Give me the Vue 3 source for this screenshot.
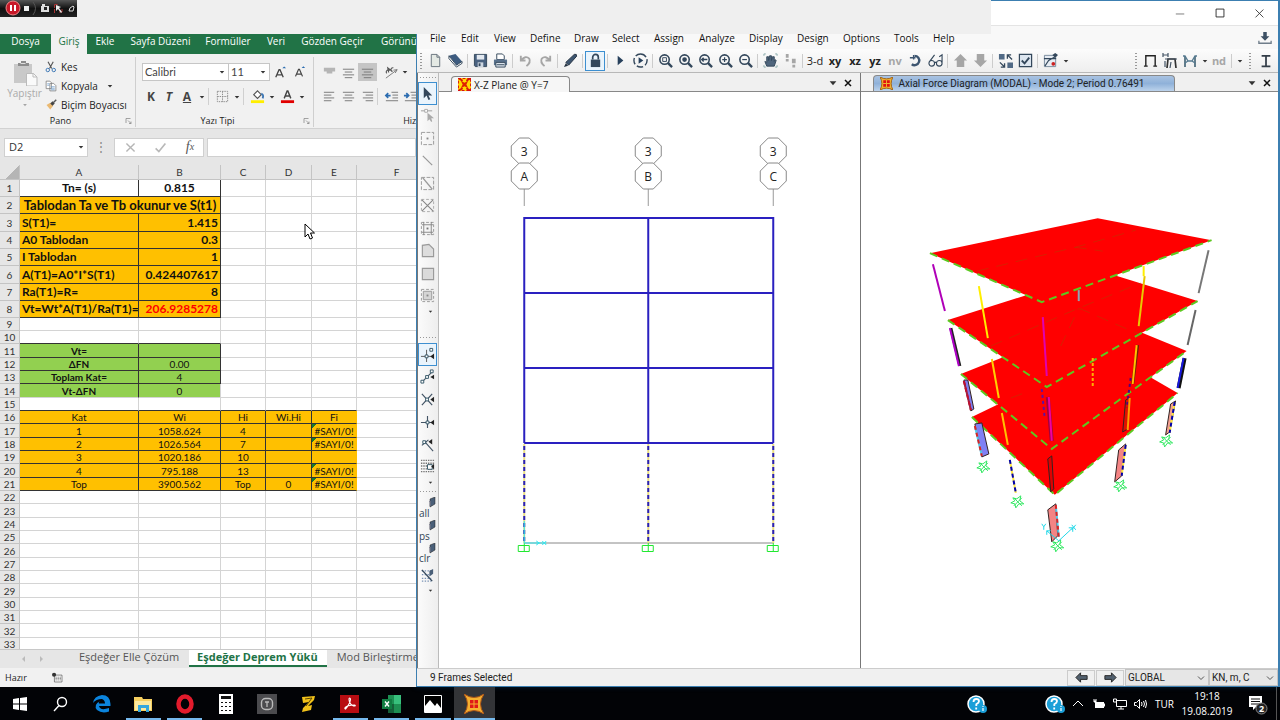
<script setup>
import { h } from 'vue'

const N = '#33475b'
const G = '#a6a6a6'
// Each shape: [path, fill, stroke, stroke width, dash]
const icons = {
  caret: [['M5 6.5h6l-3 3.5z', '#333']],
  close: [['M4 4l8 8M12 4l-8 8', 'none', '#111', 2]],
  min: [['M3 8.5h9', 'none', '#777', 1]],
  max: [['M3.5 3.5h9v9h-9z', 'none', '#222', 1]],
  closeThin: [['M4 4l9 9M13 4l-9 9', 'none', '#333', 1]],
  scissors: [['M4 1l5 9M11 1L6 10', 'none', '#555', 1.5], ['M6 12a2.3 2.3 0 1 1-4.6 0a2.3 2.3 0 1 1 4.6 0M14 12a2.3 2.3 0 1 1-4.6 0a2.3 2.3 0 1 1 4.6 0', 'none', '#3f78b5', 1.3]],
  copy: [['M1.5 1.5h5l2 2v8h-7zM6.500 4.500h5l3 3v7h-8z', '#fff', '#777', 1], ['M3 5h3M3 7h3M8 9h5M8 11h5M8 13h5', 'none', '#6d9bc9', 1]],
  brush: [['M2 8l5-3 4 4-4 5z', '#eab972'], ['M7 6l3-3 3 3-3 3z', '#444'], ['M11 5l4-4', 'none', '#555', 2]],
  paste: [['M2 4h18v19H2z', '#c9c9c9'], ['M6 6V3h3V1h5v2h3v3z', '#8c8c8c'], ['M8.500 3.500h5', 'none', '#ddd', 1], ['M14.500 13.500h7l3.500 3.500v9h-10.500z', '#fafafa', '#bbb', 1], ['M21 13v4h4', 'none', '#bbb', 1]],
  growA: [['M4 13L7.500 5h1L12 13M5.500 10.500h5', 'none', '#444', 1.4], ['M11 3.500l2-2 2 2z', '#2b6cb0']],
  borders: [['M2.500 2.500h11v11h-11zM8 2.500v11M2.500 8h11', 'none', '#888', 1, '1.500 1']],
  bucket: [['M4 6l4-4 4 4-4 4z', '#fff', '#555', 1.2], ['M12 5q3 1 1.500 5', 'none', '#3f78b5', 2], ['M1 12h14v3H1z', '#ffee00']],
  fontA: [['M4.500 10L7.600 2h.8L11.500 10M5.500 7.500h5', 'none', '#444', 1.5], ['M1 12h14v3H1z', '#e00000']],
  alTop: [['M2 3h12v4H2zM5 7h6v2H5z', '#b5b5b5']],
  alMid: [['M2 4.500h12M4 7.500h8M2 10.500h12M4 13.500h8', 'none', '#777', 1]],
  alLeft: [['M2 3.500h11M2 6.500h8M2 9.500h11M2 12.500h8', 'none', '#777', 1]],
  alCen: [['M2 3.500h12M4 6.500h8M2 9.500h12M4 12.500h8', 'none', '#777', 1]],
  alRight: [['M3 3.500h11M6 6.500h8M3 9.500h11M6 12.500h8', 'none', '#777', 1]],
  orient: [['M2 14L14 5M14 5l-4 .5M14 5l-2 3.500', 'none', '#777', 1], ['M6 6a2 2 0 1 0-3 3M5 8l-1-5 5 4a2 2 0 1 1 1-4', 'none', '#555', 1.2]],
  outdent: [['M8 3.500h7M9 6.500h6M9 9.500h6M2 12.500h13', 'none', '#777', 1], ['M7 7H2M4.500 4.500L2 7l2.500 2.500', 'none', '#2b6cb0', 1.8]],
  indent: [['M8 3.500h7M9 6.500h6M9 9.500h6M2 12.500h13', 'none', '#777', 1], ['M1 7h5M3.500 4.500L6 7 3.500 9.500', 'none', '#2b6cb0', 1.8]],
  launcher: [['M2 12V3h9', 'none', '#777', 1.300], ['M6 7l6 6M12 9v4H8', 'none', '#777', 1.300]],
  x: [['M3 3l10 10M13 3L3 13', 'none', '#b5b5b5', 1.7]],
  tick: [['M2 9l4 4 8-10', 'none', '#b8b8b8', 2]],
  macro: [['M3.500 4.500h11v10h-11z', '#fff', '#555', 1], ['M5 7.500h9M5 9.500h9M5 11.500h9', 'none', '#555', 1, '2 1'], ['M6 4a3 3 0 1 1-6 0a3 3 0 1 1 6 0', '#333']],
  // structural toolbar
  file: [['M3.500 1.500h6l3 3v10h-9z', '#e4e9e4', '#66727c', 1], ['M9.500 1.500v3h3', 'none', '#66727c', 1]],
  book: [['M1 3l7-2 7 8-6 4z', '#3d5c80'], ['M1 3v3l8 9 6-4V9l-6 4z', '#fff', '#33475b', 1]],
  save: [['M1.500 1.500h13v13h-12l-1-1z', '#4a6280', N, 1], ['M4 2h8v5H4z', '#e3e9f0'], ['M5 10h6v5H5z', '#cfd8e2'], ['M6 11h2v3H6z', N]],
  print: [['M4 1h6l2 2v4H4z', '#fff', N, 1], ['M1 7h14v6H1z', '#59718c'], ['M3 10h10v5H3z', '#dbe3ec', N, 1], ['M4 12.500h8', 'none', N, 1]],
  undo: [['M3 3v5h5M3 8q5-6 9-2 2 4-3 8', 'none', G, 2]],
  redo: [['M13 3v5H8M13 8Q8 2 4 6q-2 4 3 8', 'none', G, 2]],
  pen: [['M3 10L12 1.500q3-1 2.500 2L6 13z', '#3d5570', '#22303f', 1], ['M1 15l2-4 2.500 2.500z', '#22303f']],
  lock: [['M3 7h10v8H3z', N], ['M5 7V4.500a3 3 0 0 1 6 0V7', 'none', N, 1.8]],
  play: [['M5 3l6 5-6 5z', '#27405c']],
  playC: [['M6 4.500l5 3.500-5 3.500z', '#27405c'], ['M8 1a7 7 0 1 1 0 14a7 7 0 1 1 0-14', 'none', '#33475b', 1.5, '7 2.500']],
  mag: [['M12 7a5 5 0 1 1-10 0a5 5 0 1 1 10 0', 'none', N, 1.700], ['M10.500 10.500L15 15', 'none', N, 2.5]],
  hand: [['M4 14L2 9l2 1V4h2v4l1-5h2v5l1-4h2v5l1-2 1 1-2 6z', '#4f657d', '#33475b', 1], ['M1 3V1h2M13 1h2v2M1 13v2h2M15 13v2h-2', 'none', '#8aa', 1]],
  steps: [['M3 1h3v4H3zM3 6.500h3v2.500H3zM9.500 6h4v5h-4zM10 12.500h3v3h-3z', G]],
  rotate: [['M7 3a5 5 0 1 1-3 9', 'none', '#3d5570', 2.500], ['M2 5h6M6 2v5', 'none', '#3d5570', 1.500]],
  glasses: [['M7 11a3 3 0 1 1-6 0a3 3 0 1 1 6 0M15 11a3 3 0 1 1-6 0a3 3 0 1 1 6 0M1 10L7 2M7 10h2M15 10V2l-3 2', 'none', N, 1.2]],
  up: [['M8 1l7 7h-3v7H4V8H1z', G]],
  down: [['M8 15L1 8h3V1h8v7h3z', G]],
  swap: [['M1 1h6v6H1zM10 10h6v6h-6z', '#516a86'], ['M15 7L10 2M10 6V2h4M2 10l5 5M7 11v4H3', 'none', N, 1.400]],
  check: [['M1.500 1.500h13v13h-13z', '#dde6f0', N, 1.300], ['M4 8l3 3 5-6', 'none', N, 2]],
  view: [['M1.500 2.500h12v12h-12z', '#e6ecf3', '#78899c', 1], ['M1 6h13M2 14l4-6 7-4', 'none', N, 1.200], ['M13 11.500a2 2 0 1 1-4 0a2 2 0 1 1 4 0', '#c22'], ['M10 2l3-2 3 2-3 3z', '#33475b']],
  portal: [['M3 14V3h10v11M1 14h4M11 14h4', 'none', '#222', 1.500]],
  portal2: [['M5 15l1-9h7l1 9', 'none', '#333', 1.700], ['M3 6h12M3 14V8M9 9l-1 6M1 2h5M1 0v4M6 0v4', 'none', '#456', 1.200]],
  portal3: [['M3 14V3M13 14V3', 'none', '#33576b', 1.500], ['M1 3h2l3 5h4l3-5h2M3 10l3-2M13 10l-3-2', 'none', '#557a90', 1.300]],
  ibeam: [['M3 2h10M8 2v12M3 14h10', 'none', '#333d48', 2]],
  download: [['M6 1h4v5h3L8 11 3 6h3z', '#3d5064'], ['M1 11v3h14v-3', 'none', '#6f7d8a', 1.500]],
  left: [['M7 3v3h7v4H7v3L2 8z', '#52606e', '#222', 1]],
  right: [['M9 3v3H2v4h7v3l5-5z', '#52606e', '#222', 1]],
  // side tools
  arrow: [['M4 1v12l3-3 2 5 2-1-2-4h4z', N]],
  reshape: [['M1 3h12', 'none', '#aaa', 1.200], ['M5 1.500h3v3H5z', '#fff', '#aaa', 1], ['M8 5v9l2-2 2 3 1-1-1-3h3z', '#aaa']],
  joint: [['M1.500 1.500h13v13h-13z', 'none', '#999', 1, '4 1.500'], ['M7 7h2v2H7z', '#888']],
  line: [['M3 3l10 10', 'none', '#999', 1.300]],
  lineBox: [['M1.500 1.500h13v13h-13z', 'none', '#999', 1, '4 1.500'], ['M3 2l10 12', 'none', '#999', 1.500]],
  brace: [['M1.500 1.500h13v13h-13z', 'none', '#aaa', 1, '3 2'], ['M2 2l12 12M14 2L2 14', 'none', '#888', 1.200]],
  beams: [['M1.500 1.500h13v13h-13z', 'none', '#999', 1, '3 2'], ['M4 1v14M12 1v14M2 4h12M2 12h12', 'none', '#888', 1], ['M7 7h2v2H7z', '#777']],
  poly: [['M2.500 14.500v-12l7-1 5 5v8z', '#ddd', '#999', 1.200]],
  rect: [['M2.500 2.500h12v12h-12z', '#dadada', '#999', 1.200]],
  rectBox: [['M1.500 1.500h13v13h-13z', 'none', '#999', 1, '3 2'], ['M3.500 3.500h9v9h-9z', '#d5d5d5', '#999', 1], ['M7 7h2v2H7z', '#888']],
  snap1: [['M1 10h12M7 3v13', 'none', '#555', 1], ['M5.500 8.500h3v3h-3zM10.500 1.500h3v3h-3z', '#fff', '#356', 1], ['M15 7v6l-4-3z', '#222']],
  snap2: [['M2 14L13 3', 'none', '#456', 1.200], ['M1 12h3v3H1zM6 7h3v3H6zM11 1h3v3h-3z', '#fff', '#356', 1], ['M15 6v5l-4-2.500z', '#222']],
  snap3: [['M2 2l11 12M13 2L2 14', 'none', '#456', 1.300], ['M6 6.500h3v3H6z', '#fff', '#356', 1], ['M15 5v6l-4-3z', '#222']],
  snap4: [['M1 9h12M8 2v13', 'none', '#456', 1.200], ['M6.500 7.500h3v3h-3z', '#fff', '#356', 1], ['M15 6v6l-4-3z', '#222']],
  snap5: [['M5 5l9 10M2 9l7-6', 'none', '#456', 1.200], ['M3 4h3v3H3z', '#fff', '#356', 1], ['M13 2v6L9 5z', '#222']],
  snap6: [['M1 1.500h14M1 4.500h14M1 7.500h14M1 10.500h14M1 13.500h14', 'none', '#777', 1.500, '1.500 1'], ['M8 6h5v5H8z', '#fff', '#356', 1], ['M15 5v6l-3-3z', '#222']],
  flag: [['M4 2l5-2v7l-5 3z', '#4a5f78', '#222', 0.500], ['M3 5l1-1v5', 'none', '#889', 1]],
  interLine: [['M2 3h10M2 7h10M2 11h10M2 14h10', 'none', '#7a93b5', 1.200, '1.500 1.500'], ['M2 2l11 12', 'none', N, 1.500], ['M10 3l4-2v5l-4 3z', '#4a5f78']]
}
const magIn = {
  magR: [['M5 5h4v4H5z', 'none', N, 1]],
  magD: [['M9.500 7a2.500 2.500 0 1 1-5 0a2.500 2.500 0 1 1 5 0', N]],
  magB: [['M4 7h6M6 5L4 7l2 2', 'none', N, 1.500]],
  magP: [['M4.500 7h5M7 4.500v5', 'none', N, 1.300]],
  magM: [['M4.500 7h5', 'none', N, 1.300]]
}
for (const k in magIn) icons[k] = [...icons.mag, ...magIn[k]]

const Ico = (p) => {
  const b = p.b || 16
  const s = p.s || 16
  return h('svg', { viewBox: `0 0 ${b} ${b}`, width: s, height: s, 'aria-hidden': 'true' },
    icons[p.n].map(([d, fill, stroke, w, dash]) =>
      h('path', { d, fill, stroke: stroke || 'none', 'stroke-width': w, 'stroke-dasharray': dash })))
}
Ico.props = ['n', 's', 'b']

const ribbonTabs = ['Dosya', 'Giriş', 'Ekle', 'Sayfa Düzeni', 'Formüller', 'Veri', 'Gözden Geçir', 'Görünür']
const cols = ['A', 'B', 'C', 'D', 'E', 'F']
const top = [
  ['Tn= (s)', '0.815'], ['Tablodan Ta ve Tb okunur ve S(t1)'], ['S(T1)=', '1.415'], ['A0 Tablodan', '0.3'],
  ['I Tablodan', '1'], ['A(T1)=A0*I*S(T1)', '0.424407617'], ['Ra(T1)=R=', '8'], ['Vt=Wt*A(T1)/Ra(T1)=', '206.9285278']
]
const mid = { 11: ['Vt=', ''], 12: ['ΔFN', '0.00'], 13: ['Toplam Kat=', '4'], 14: ['Vt-ΔFN', '0'] }
const low = {
  16: ['Kat', 'Wi', 'Hi', 'Wi.Hi', 'Fi'], 17: ['1', '1058.624', '4', '', '#SAYI/0!'], 18: ['2', '1026.564', '7', '', '#SAYI/0!'],
  19: ['3', '1020.186', '10', '', ''], 20: ['4', '795.188', '13', '', '#SAYI/0!'], 21: ['Top', '3900.562', 'Top', '0', '#SAYI/0!']
}
const rows = Array.from({ length: 33 }, (_, i) => {
  const n = i + 1
  const src = n < 9 ? top[i] : mid[n] || low[n] || []
  const kind = n === 1 ? 'first' : n < 9 ? 'calc' : mid[n] ? 'green' : low[n] ? 'amber' : ''
  const used = kind === 'amber' ? 5 : kind ? 2 : 0
  const cells = []
  for (let c = 0; c < 6; c++) {
    if (n === 2 && c === 1) continue
    const text = src[c] || ''
    cells.push({
      text,
      span: n === 2 && c === 0 ? 2 : 1,
      cls: [c < used ? kind : '', c < used && n !== 14 ? 'line' : '', c === 4 && kind === 'amber' ? 'end' : '',
        n > 2 && n < 9 ? (c === 0 ? 'l' : 'r') : '', n === 2 && c === 0 ? 'wide' : '', n === 8 && c === 1 ? 'red' : '', text[0] === '#' ? 'err' : '',
        (n === 10 && c < 2) || (n === 15 && c < 5) ? 'over' : '', n === 14 && c === 0 ? 'side' : '']
    })
  }
  return { n, tall: n < 9, long: n < 9 ? n % 3 === 0 : (n - 8) % 3 === 0, cells }
})

const menus = ['File', 'Edit', 'View', 'Define', 'Draw', 'Select', 'Assign', 'Analyze', 'Display', 'Design', 'Options', 'Tools', 'Help']
const tools = ['file', 'book', '|', 'save', 'print', '|', 'undo', 'redo', '|', 'pen', '|', 'lock', '|', 'play', 'playC', '|',
  'magR', 'magD', 'magB', 'magP', 'magM', '|', 'hand', 'steps', '|', '=3-d', '=xy', '=xz', '=yz', '=nv', 'rotate', 'glasses', '|',
  'up', 'down', '|', 'swap', 'check', '|', 'view']
const draw = ['arrow', 'reshape', 'joint', 'line', 'lineBox', 'brace', 'beams', 'poly', 'rect', 'rectBox']
const snaps = ['snap1', 'snap2', 'snap3', 'snap4', 'snap5', 'snap6']
const picks = ['all', 'ps', 'clr']

const axes = [[524, 'A'], [648, 'B'], [773, 'C']]
const oct = (x, y) => [[-5, -13], [5, -13], [13, -5], [13, 5], [5, 13], [-5, 13], [-13, 5], [-13, -5]]
  .map(([a, b]) => `${x + a},${y + b}`).join(' ')

// Floors from lowest to highest: left, back, right, front
const floors = [
  [[971, 417], [1106, 352], [1177, 393], [1054, 495]],
  [[960, 374], [1103, 317], [1186, 351], [1051, 449]],
  [[947, 320], [1101, 271], [1197, 301], [1046, 387]],
  [[929, 253], [1097, 218], [1211, 240], [1041, 302]]
].map(([l, b, r, f]) => ({ face: [l, b, r, f].join(' '), edge: [l, f, r].join(' ') }))
// Members: x1, y1, x2, y2, colour, width, dash
const bars = [
  [932, 264, 944, 311, '#b000b8', 2], [978, 286, 987, 338, '#ffee00', 2], [1078, 290, 1078, 301, '#8fa3b5', 2],
  [1042, 317, 1046, 376, '#e000b0', 2], [1143, 266, 1143, 276, '#ffee00', 2], [1144, 276, 1138, 326, '#e8c800', 2],
  [1208, 250, 1198, 293, '#777', 2], [950, 328, 959, 366, '#222', 3], [949, 328, 958, 366, '#b000c8', 2],
  [991, 359, 998, 398, '#ffd000', 2], [1092, 358, 1092, 388, '#ffb000', 2, '3 2'], [1047, 397, 1051, 441, '#a00040', 4],
  [1048, 397, 1051, 441, '#f000a0', 2], [1041, 389, 1044, 419, '#6010a0', 2, '3 3'],
  [1137, 345, 1132, 384, '#702000', 3], [1136, 345, 1132, 384, '#ffc000', 2], [1195, 310, 1187, 345, '#666', 2],
  [1184, 358, 1178, 388, '#111', 4], [1183, 358, 1177, 388, '#1818e0', 2],
  [1001, 413, 1007, 445, '#ffc000', 2], [1130, 378, 1126, 408, '#500080', 2, '3 3'], [1129, 398, 1127, 430, '#ffa000', 2]
]
const panels = [
  ['963,380 967,380 973,409 970,411', '#7c7cf0'], ['974,424 981,423 988,454 981,457', '#8080f4'],
  ['1047,510 1055,504 1057,536 1051,542', '#f48484'], ['1118,450 1125,444 1121,476 1114,482', '#f48484'],
  ['1170,404 1175,401 1169,432 1165,435', '#f4a090'], ['1047,459 1051,456 1053,489 1050,492', '#e00000'],
  ['1125,400 1129,398 1127,429 1122,432', '#e01000']
]
const cut = [
  [974, 426, 981, 456, '#d22', '#55c8e8'], [1009, 460, 1015, 493, '#0000b0', '#ffe840'], [1055, 505, 1058, 537, '#d22', '#55c8e8'],
  [1125, 445, 1121, 476, '#0000b0', '#ffe840'], [1174, 402, 1169, 433, '#0000b0', '#ffe840'], [963, 381, 970, 410, '#c01030', '#a02040']
]
const stars = [[983, 467], [1017, 502], [1057, 546], [1120, 486], [1166, 441]]

const apps = [['search'], ['edge'], ['explorer', 1], ['opera', 1], ['calc'], ['typing'], ['zee'], ['pdf', 1], ['excel', 1], ['photos', 1], ['sap', 2]]
</script>

<template>
  <div class="screen">
    <main class="desktop">
      <section class="excel" aria-label="Excel">
        <nav class="ribbon-tabs">
          <button v-for="(t, i) in ribbonTabs" :key="t" :class="{ on: i === 1 }">{{ t }}</button>
        </nav>
        <div class="ribbon">
          <div class="group pano">
            <div class="body">
              <button class="paste"><Ico n="paste" :s="26" :b="26" /><span>Yapıştır</span><Ico n="caret" :s="10" class="faint" /></button>
              <div class="stack">
                <button><Ico n="scissors" :s="12" />Kes</button>
                <button><Ico n="copy" :s="12" />Kopyala<Ico n="caret" :s="12" class="drop" /></button>
                <button><Ico n="brush" :s="12" />Biçim Boyacısı</button>
              </div>
            </div>
            <footer>Pano<Ico n="launcher" :s="8" /></footer>
          </div>
          <div class="group font">
            <div class="body col">
              <div class="line-a">
                <span class="pick face"><select aria-label="Yazı tipi"><option>Calibri</option></select><Ico n="caret" :s="12" /></span>
                <span class="pick size"><select aria-label="Boyut"><option>11</option></select><Ico n="caret" :s="12" /></span>
                <button aria-label="Büyüt"><Ico n="growA" :s="15" /></button>
                <button aria-label="Küçült"><Ico n="growA" :s="14" /></button>
              </div>
              <div class="line-b">
                <button><b>K</b></button><button><b><i>T</i></b></button><button><b><u>A</u></b></button>
                <button class="dd" aria-label="Altı çizili"><Ico n="caret" :s="12" /></button><i class="bar"></i>
                <button aria-label="Kenarlık"><Ico n="borders" :s="15" /></button><button class="dd" aria-label="Kenarlıklar"><Ico n="caret" :s="12" /></button><i class="bar"></i>
                <button aria-label="Dolgu"><Ico n="bucket" :s="15" /></button><button class="dd" aria-label="Dolgu rengi"><Ico n="caret" :s="12" /></button>
                <button aria-label="Yazı rengi"><Ico n="fontA" :s="15" /></button><button class="dd" aria-label="Yazı renkleri"><Ico n="caret" :s="12" /></button>
              </div>
            </div>
            <footer>Yazı Tipi<Ico n="launcher" :s="8" /></footer>
          </div>
          <div class="group align">
            <div class="body col">
              <div class="line-b up">
                <button aria-label="Üste"><Ico n="alTop" :s="15" /></button><button aria-label="Ortaya"><Ico n="alMid" :s="15" /></button>
                <button class="sel" aria-label="Alta"><Ico n="alMid" :s="15" /></button><i class="bar none"></i>
                <button aria-label="Yön"><Ico n="orient" :s="15" /></button><button class="dd" aria-label="Yönler"><Ico n="caret" :s="12" /></button>
              </div>
              <div class="line-b">
                <button aria-label="Sola"><Ico n="alLeft" :s="15" /></button><button aria-label="Ortala"><Ico n="alCen" :s="15" /></button>
                <button aria-label="Sağa"><Ico n="alRight" :s="15" /></button><i class="bar"></i>
                <button aria-label="Azalt"><Ico n="outdent" :s="15" /></button><button aria-label="Artır"><Ico n="indent" :s="15" /></button>
              </div>
            </div>
            <footer>Hizalama</footer>
          </div>
        </div>
        <div class="formula">
          <span class="name"><input aria-label="Ad kutusu" value="D2" /><Ico n="caret" :s="12" /></span>
          <span class="dots">⋮</span>
          <span class="fx">
            <button aria-label="İptal"><Ico n="x" :s="13" /></button><button aria-label="Gir"><Ico n="tick" :s="13" /></button><button class="f">f<sub>x</sub></button>
          </span>
          <input class="expr" aria-label="Formül" />
        </div>
        <div class="sheet">
          <table>
            <colgroup><col class="c0" /><col v-for="c in cols" :key="c" :class="'c' + c" /></colgroup>
            <thead><tr><th class="corner"></th><th v-for="c in cols" :key="c">{{ c }}</th></tr></thead>
            <tbody>
              <tr v-for="r in rows" :key="r.n" :class="{ tall: r.tall, long: r.long }">
                <th>{{ r.n }}</th>
                <td v-for="(c, i) in r.cells" :key="i" :colspan="c.span" :class="c.cls"><span>{{ c.text }}</span></td>
              </tr>
            </tbody>
          </table>
        </div>
        <div class="sheet-tabs">
          <span class="nav"><i></i><i class="next"></i></span>
          <button>Eşdeğer Elle Çözüm</button><button class="on">Eşdeğer Deprem Yükü</button><button>Mod Birleştirme</button>
        </div>
        <div class="ready"><span>Hazır</span><Ico n="macro" :s="11" /></div>
        <svg class="cursor" viewBox="0 0 12 18" width="12" height="18"><path d="M1 1v13l3-3 2 5 2.500-1-2-5h4z" fill="#fff" stroke="#000" /></svg>
      </section>

      <section class="sap" aria-label="SAP2000">
        <header class="title">
          <button aria-label="Simge durumu"><Ico n="min" :s="15" /></button><button aria-label="Ekranı kapla"><Ico n="max" :s="14" /></button><button aria-label="Kapat"><Ico n="closeThin" :s="14" /></button>
        </header>
        <nav class="menu">
          <button v-for="m in menus" :key="m">{{ m }}</button>
          <span class="get"><Ico n="download" :s="14" /></span>
        </nav>
        <div class="tools">
          <i class="grip"></i>
          <template v-for="(t, i) in tools" :key="i">
            <i v-if="t === '|'" class="sep"></i>
            <button v-else-if="t[0] === '='" :class="['txt', { dim: t === '=nv', thin: t === '=3-d' }]">{{ t.slice(1) }}</button>
            <button v-else :class="{ held: t === 'lock' }" :aria-label="t"><Ico :n="t" :s="15" /></button>
          </template>
          <button class="dd" aria-label="more"><Ico n="caret" :s="12" /></button>
          <span class="fill"></span>
          <i class="grip"></i>
          <button aria-label="frame"><Ico n="portal" :s="15" /></button><button aria-label="forces"><Ico n="portal2" :s="16" /></button>
          <button aria-label="shape"><Ico n="portal3" :s="16" /></button><button class="dd small" aria-label="shapes"><Ico n="caret" :s="12" /></button>
          <button class="txt dim">nd</button><i class="sep"></i><button class="dd" aria-label="names"><Ico n="caret" :s="12" /></button>
          <i class="grip"></i><button class="last" aria-label="section"><Ico n="ibeam" :s="14" /></button>
        </div>
        <div class="work">
          <aside>
            <i class="hgrip"></i>
            <div class="ten"><button v-for="(d, i) in draw" :key="d" :class="{ held: !i }" :aria-label="d"><Ico :n="d" :s="15" /></button></div>
            <Ico n="caret" :s="13" class="more" />
            <i class="hgrip low"></i>
            <div class="six"><button v-for="(d, i) in snaps" :key="d" :class="{ held: !i }" :aria-label="d"><Ico :n="d" :s="15" /></button></div>
            <Ico n="caret" :s="13" class="more" />
            <i class="hgrip"></i>
            <div class="four">
              <button v-for="p in picks" :key="p" class="word">{{ p }}<Ico n="flag" :s="11" :b="11" /></button>
              <button aria-label="line select"><Ico n="interLine" :s="15" /></button>
            </div>
            <Ico n="caret" :s="13" class="more" />
          </aside>
          <article class="doc first-doc">
            <div class="doc-bar">
              <button class="tab plain"><svg viewBox="0 0 14 14" width="13" height="13"><path d="M0 0h14v14H0z" fill="#ffd800" /><path d="M0 0l5 3M14 0L9 3M0 14l5-3M14 14l-5-3" stroke="#d81010" stroke-width="2" /><path d="M0 0h14v14H0z" fill="none" stroke="#d81010" stroke-width="2" stroke-dasharray="3 2" /><path d="M3 3l4 2 4-2-2 4 2 4-4-2-4 2 2-4z" fill="#e02000" /></svg>X-Z Plane @ Y=7</button>
              <i class="rest"></i><button class="dd" aria-label="list"><Ico n="caret" :s="18" /></button><button class="dd" aria-label="close"><Ico n="close" :s="12" /></button>
            </div>
            <svg class="view" viewBox="439 92 420 576">
              <g v-for="[x, l] in axes" :key="l">
                <path :d="`M${x} 164v42`" stroke="#999" />
                <polygon :points="oct(x, 151)" class="tag" /><polygon :points="oct(x, 176)" class="tag" />
                <text :x="x" y="156">3</text><text :x="x" y="181">{{ l }}</text>
              </g>
              <path d="M524 543h249" stroke="#888" stroke-width="1" />
              <path d="M524 218h249M524 293h249M524 368h249M524 443h249M524 217v226M648 217v226M773 217v226" stroke="#2a20c0" stroke-width="2" />
              <g v-for="[x] in axes" :key="x">
                <path :d="`M${x} 444v99`" stroke="#e8dc80" stroke-width="2" />
                <path :d="`M${x} 446v97`" stroke="#2a20b8" stroke-width="2" stroke-dasharray="4 3" />
                <path :d="`M${x - 6} 545.500h11v6h-11zM${x} 543v8`" fill="none" stroke="#20e830" />
              </g>
              <path d="M524 543h22M536 541l3 2-3 2M542 541l4 4M546 541l-4 4M524 543v-22" stroke="#30e8f0" fill="none" />
            </svg>
          </article>
          <article class="doc second">
            <div class="doc-bar">
              <button class="tab blue"><svg viewBox="0 0 14 14" width="13" height="13"><path d="M0 0q7 4 14 0-4 7 0 14-7-4-14 0 4-7 0-14z" fill="#f0b030" stroke="#a06010" /><path d="M3.500 3.500h3v3h-3zM7.500 3.500h3v3h-3zM3.500 7.500h3v3h-3zM7.500 7.500h3v3h-3z" fill="#e01010" /></svg>Axial Force Diagram (MODAL) - Mode 2; Period 0.76491</button>
              <i class="rest"></i><button class="dd" aria-label="list"><Ico n="caret" :s="18" /></button><button class="dd" aria-label="close"><Ico n="close" :s="12" /></button>
            </div>
            <svg class="view" viewBox="860 92 418 576">
              <g v-for="f in floors" :key="f.face">
                <polygon :points="f.face" fill="#f00" />
                <polyline :points="f.edge" fill="none" stroke="#5cc820" stroke-width="2" stroke-dasharray="8 5" />
              </g>
              <path d="M976 271l99-24 60-17M1074 247l28 4M1060 346l18-38M990 346l88-38 62-25M1078 308l60 26M1010 398l16-6" stroke="#b04000" stroke-width="1" stroke-dasharray="12 8" fill="none" opacity=".5" />
              <polygon v-for="p in panels" :key="p[0]" :points="p[0]" :fill="p[1]" stroke="#322" stroke-width="1" />
              <line v-for="(b, i) in bars" :key="i" :x1="b[0]" :y1="b[1]" :x2="b[2]" :y2="b[3]" :stroke="b[4]" :stroke-width="b[5]" :stroke-dasharray="b[6]" />
              <g v-for="c in cut" :key="c[0]" stroke-width="2">
                <line :x1="c[0]" :y1="c[1]" :x2="c[2]" :y2="c[3]" :stroke="c[5]" />
                <line :x1="c[0]" :y1="c[1]" :x2="c[2]" :y2="c[3]" :stroke="c[4]" stroke-dasharray="4 3" />
              </g>
              <path v-for="[x, y] in stars" :key="x" :d="`M${x - 5} ${y - 4}l4 1 4-3-1 5 4 3-5 0-3 4-1-4-4-1 4-2zM${x - 4} ${y + 4}l8-8M${x - 4} ${y - 4}l8 8`" fill="none" stroke="#30e860" />
              <path d="M1058 541l14-13M1068 528l4 0 0 4M1058 541l-12-10M1046 535v-4h4M1071 525l4 5M1075 525l-4 5M1041 524l2 3 2-3M1043 527v3" fill="none" stroke="#20d8e8" />
            </svg>
          </article>
        </div>
        <footer class="status">
          <span>9 Frames Selected</span>
          <button aria-label="previous"><Ico n="left" :s="15" /></button><button aria-label="next"><Ico n="right" :s="15" /></button>
          <span class="unit a"><select aria-label="Coordinate system"><option>GLOBAL</option></select><svg viewBox="0 0 8 8" width="8" height="8"><path d="M1 2.500l3 3 3-3" fill="none" stroke="#555" /></svg></span>
          <span class="unit b"><select aria-label="Units"><option>KN, m, C</option></select><svg viewBox="0 0 8 8" width="8" height="8"><path d="M1 2.500l3 3 3-3" fill="none" stroke="#555" /></svg></span>
        </footer>
      </section>

      <div class="cover">
        <svg viewBox="0 0 77 17" width="77" height="17">
          <defs><linearGradient id="rec" x2="0" y2="1"><stop offset="0" stop-color="#555" /><stop offset=".5" stop-color="#111" /><stop offset="1" stop-color="#222" /></linearGradient></defs>
          <path d="M0 0h77v17H0z" fill="url(#rec)" /><circle cx="13" cy="8" r="7" fill="#c81828" stroke="#e88" />
          <path d="M11 5v6M15 5v6" stroke="#fff" stroke-width="2" /><path d="M24 6h5v5h-5z" fill="#eee" />
          <path d="M33 2q5 6 0 13" stroke="#555" fill="none" /><path d="M41 6h8v6h-8zM42 4h3v2h-3z" fill="#ddd" /><path d="M44 7h3v3h-3z" fill="#222" />
          <path d="M54.500 8V4.500h3M62 9v3h-3M54.500 9v4" stroke="#a33" fill="none" /><path d="M56 5l5 2-2 1 3 4-1 1-3-4-2 2z" fill="#eee" />
          <path d="M69 11l1-3 3-2 1 1-1 4z" fill="none" stroke="#ddd" stroke-width="1" />
        </svg>
      </div>
    </main>

    <footer class="taskbar">
      <button class="start" aria-label="Start"><svg viewBox="0 0 14 14" width="14" height="14"><path d="M0 2l6-1v5.500H0zM7 1l7-1v6.500H7zM0 7.500h6V13l-6-1zM7 7.500h7V14l-7-1z" fill="#fff" /></svg></button>
      <div class="apps">
        <button v-for="[a, s] in apps" :key="a" :class="{ run: s, front: s === 2 }" :aria-label="a">
          <svg viewBox="0 0 20 20" width="20" height="20">
            <g v-if="a === 'search'" fill="none" stroke="#fff" stroke-width="1.400"><circle cx="11" cy="8" r="4.500" /><path d="M8 11.500L3 17" /></g>
            <path v-else-if="a === 'edge'" d="M1 9Q2 2 10 1q8 0 8.500 9v2H7q1 5 10 2v3.500Q10 20 5 16q-4-5 3-9-2 1-1 2.500h6Q13 6 10 5 4 5 1 9z" fill="#0b84dd" />
            <g v-else-if="a === 'explorer'"><path d="M1 3h8l1 2h9v12H1z" fill="#f6cf60" /><path d="M2 7h16v9H2z" fill="#fce9a0" /><path d="M5 18v-7h11v7h-3v-4H8v4z" fill="#35a7dd" /></g>
            <ellipse v-else-if="a === 'opera'" cx="10" cy="10" rx="6.500" ry="7.500" fill="none" stroke="#e21b2c" stroke-width="4.500" />
            <g v-else-if="a === 'calc'"><path d="M3 0h14v20H3z" fill="#fff" /><path d="M5 2h10v3H5zM5 8h2v1H5zM9 8h2v1H9zM13 8h2v1h-2zM5 12h2v1H5zM9 12h2v1H9zM13 12h2v1h-2zM5 16h2v1H5zM9 16h2v1H9zM13 16h2v1h-2z" fill="#111" /></g>
            <g v-else-if="a === 'typing'"><path d="M0 0h20v20H0z" fill="#4b4b4e" /><rect x="4.500" y="4.500" width="11" height="11" rx="4" fill="none" stroke="#bbb" stroke-width="1.400" /><path d="M8 8h4M10 8v5" stroke="#bbb" stroke-width="1.300" /></g>
            <g v-else-if="a === 'zee'"><path d="M3 3l13-1-1 4-6 6 4-1-1 5-9 2 1-4 6-6-6 1z" fill="#f2c21a" /><path d="M6 5l7-1-6 8" fill="none" stroke="#5c4500" /></g>
            <g v-else-if="a === 'pdf'"><path d="M0 1h19v18H0z" fill="#b80d12" /><path d="M9.500 4q2 0 0 5-2 4-4 6-2-1 2-3 4-1 7-1 2 1-1 1-3-1-4-4-1-4 0-4z" fill="none" stroke="#fff" stroke-width="1.100" /></g>
            <g v-else-if="a === 'excel'"><path d="M6 1h13v18H6z" fill="#1e8f52" /><path d="M12 1h7v9h-7z" fill="#38c07c" /><path d="M6 10h6v9H6z" fill="#155f38" /><path d="M0 5h10v10H0z" fill="#107c41" /><path d="M3 7.500l4 5M7 7.500l-4 5" stroke="#fff" stroke-width="1.400" /></g>
            <g v-else-if="a === 'photos'"><path d="M1.500 1.500h17v17h-17z" fill="#000" stroke="#fff" /><path d="M2 18v-6l5-6 5 6 2-3 4 5v4z" fill="#fff" /></g>
            <g v-else><path d="M0 0q10 7 20 0-7 10 0 20-10-7-20 0 7-10 0-20z" fill="#f5b030" stroke="#b05818" /><path d="M6 6h3.500v3.500H6zM10.500 6H14v3.500h-3.500zM6 10.500h3.500V14H6zM10.500 10.500H14V14h-3.500z" fill="#e01818" /></g>
          </svg>
        </button>
      </div>
      <div class="tray">
        <svg v-for="k in 2" :key="k" :class="'help' + k" viewBox="0 0 20 18" width="20" height="18"><circle cx="9" cy="9" r="8" fill="#1b9fd8" stroke="#fff" stroke-width="1.500" /><path d="M6.500 7q0-3 2.800-3 2.700 0 2.700 2.300 0 1.500-2.700 3V11M9.200 12.500v2" stroke="#fff" stroke-width="1.800" fill="none" /><circle cx="16" cy="14" r="4" fill="#1b9fd8" /><path d="M16 13v3M16 11v1" stroke="#fff" stroke-width="1.200" /></svg>
        <svg class="chev" viewBox="0 0 12 12" width="12" height="12"><path d="M1 8l5-5 5 5" fill="none" stroke="#fff" /></svg>
        <svg class="batt" viewBox="0 0 14 12" width="14" height="12"><path d="M3 4h9v6H3z" fill="#fff" /><path d="M12.500 5.500v3M3 5V2M1 2h4M1.500 3.500h3" stroke="#fff" /></svg>
        <svg class="mon" viewBox="0 0 14 12" width="14" height="12"><path d="M3.500 2.500h10v6h-10zM8 8v3M5 11h6M.5 1h3v3h-3z" fill="none" stroke="#fff" /></svg>
        <svg class="snd" viewBox="0 0 14 12" width="14" height="12"><path d="M1.500 4.500h2l3-3v9l-3-3h-2zM8.500 4q1 2 0 4M10.500 3q2 3 0 6M12.500 2q2 4 0 8" fill="none" stroke="#fff" /></svg>
        <span class="lang">TUR</span>
        <time><span>19:18</span><span>19.08.2019</span></time>
        <span class="note"><svg viewBox="0 0 20 20" width="20" height="20"><path d="M1 1h13v11H8l-3 3v-3H1z" fill="#fff" /><path d="M3 4h9M3 6.500h9M3 9h9" stroke="#111" /><circle cx="13.500" cy="13.500" r="5.500" fill="#222" stroke="#888" /></svg><b>2</b></span>
      </div>
    </footer>
  </div>
</template>

<style>
body { margin: 0; background: #fff; }
</style>

<style scoped>
.screen { height: 100vh; display: flex; flex-direction: column; overflow: hidden; font: 10px/14px "Open Sans", "Noto Sans", sans-serif; color: #222; }
* { box-sizing: border-box; }
button { font: inherit; color: inherit; background: none; border: 0; padding: 0; margin: 0; display: flex; align-items: center; justify-content: center; white-space: nowrap; flex: none; }
svg { display: block; flex: none; }
input, select { font: inherit; color: inherit; border: 0; background: none; padding: 0; margin: 0; outline: 0; appearance: none; min-width: 0; }
.desktop { flex: 1; min-height: 0; display: flex; position: relative; }
.cover { position: absolute; left: 0; top: 0; width: 77.4%; height: 34px; background: #efefef; }

.excel { width: 32.5%; flex: none; display: flex; flex-direction: column; padding-top: 34px; overflow: hidden; position: relative; background: #e6e6e6; }
.ribbon-tabs { display: grid; grid-template-columns: 51px 36px 36px 75px 60px 36px 77px 60px; height: 20px; background: #217346; color: #fff; flex: none; }
.ribbon-tabs button { height: 20px; padding-bottom: 6px; }
.ribbon-tabs .on { background: #f1f1f1; color: #217346; }
.ribbon { display: flex; height: 75px; flex: none; background: #f1f1f1; border-bottom: 1px solid #d2d2d2; }
.group { flex: none; display: flex; flex-direction: column; border-right: 1px solid #cfcfcf; margin: 3px 0 1px; }
.pano { width: 136px; } .font { width: 178px; } .align { width: 232px; }
.body { flex: 1; min-height: 0; display: flex; padding: 0 0 0 8px; }
.body.col { flex-direction: column; padding: 6px 0 0 6px; gap: 6px; }
.group footer { flex: none; height: 12px; line-height: 12px; font-size: 9px; text-align: center; position: relative; padding-right: 14px; }
.group footer svg { position: absolute; right: 2px; top: 2px; }
.paste { width: 33px; flex-direction: column; justify-content: flex-start; padding-top: 3px; color: #aaa; height: 57px; }
.faint { opacity: .4; }
.stack { padding-left: 4px; }
.stack button { height: 19px; gap: 4px; justify-content: flex-start; }
.drop { margin-left: 2px; }
.line-a { display: flex; height: 18px; flex: none; }
.pick { display: flex; align-items: center; border: 1px solid #c6c6c6; background: #fff; font: 11px/14px Lato, sans-serif; color: #444; }
.pick select { flex: 1; padding-left: 2px; }
.face { width: 87px; } .size { width: 41px; border-left: 0; }
.line-a button { width: 19px; }
.line-b { display: flex; height: 19px; flex: none; align-items: center; font-size: 12px; color: #444; }
.line-b.up { height: 18px; }
.line-b button { width: 18px; height: 18px; }
.line-b .dd { width: 12px; }
.align .line-b button { width: 19px; }
.align .line-b .dd { width: 8px; }
.align .line-b .sel { background: #c5c5c5; }
.bar { width: 5px; height: 17px; border-left: 1px solid #d0d0d0; flex: none; }
.bar.none { border: 0; }
.formula { display: flex; align-items: center; height: 36px; flex: none; padding-left: 4px; }
.name { display: flex; align-items: center; width: 84px; height: 19px; background: #fff; border: 1px solid #d0d0d0; font-size: 11px; color: #333; }
.name input { flex: 1; padding-left: 4px; }
.dots { width: 26px; text-align: center; color: #888; font-size: 12px; }
.fx { display: flex; width: 90px; height: 19px; background: #fff; border: 1px solid #d0d0d0; margin-right: 3px; }
.fx button { width: 30px; }
.f { font: italic 14px/16px "Liberation Serif", serif; color: #555; }
.f sub { font-size: 10px; }
.expr { flex: 1; height: 19px; background: #fff; border: 1px solid #d0d0d0; }
.sheet { flex: 1; min-height: 0; overflow: hidden; background: #fff; }
table { table-layout: fixed; width: 437px; border-collapse: separate; border-spacing: 0; font: 10px/12px Lato, "Open Sans", sans-serif; color: #111; }
.c0 { width: 20px; } .cA { width: 119px; } .cB { width: 82px; } .cC { width: 45px; } .cD { width: 46px; } .cE { width: 45px; } .cF { width: 80px; }
th, td { padding: 0; height: 13px; text-align: center; vertical-align: middle; border: 0 solid #d4d4d4; border-width: 0 1px 1px 0; white-space: nowrap; overflow: hidden; }
th { font-weight: 400; background: #e6e6e6; color: #333; border-color: #c4c4c4; line-height: 12px; }
thead th { height: 15px; }
.corner { background: linear-gradient(135deg, #e6e6e6 60%, #b5b5b5 60%); }
tr.long th, tr.long td { height: 14px; }
tr.tall th, tr.tall td { height: 17px; line-height: 16px; }
tr.tall.long th, tr.tall.long td { height: 18px; }
tr.tall td { font-size: 12px; font-weight: 700; }
tr.tall td.wide { font-size: 13px; }
td.calc { background: #ffc000; } td.amber { background: #ffc000; } td.green { background: #92d050; }
td.green:nth-child(2) { font-weight: 700; }
td.line { border-color: #333; }
td.over { border-bottom-color: #333; }
td.side { border-right-color: #333; }
td.end { border-right-color: #ffc000; }
td.l { text-align: left; padding-left: 2px; }
td.r { text-align: right; padding-right: 2px; }
td.red { color: #f00; }
td.err { background: linear-gradient(135deg, #1b7a2c 3px, #ffc000 3px); }
.sheet-tabs { display: flex; height: 19px; flex: none; font-size: 11px; color: #555; border-top: 1px solid #c8c8c8; }
.sheet-tabs button { padding: 0 10px 4px; height: 17px; }
.sheet-tabs .on { background: #fff; color: #217346; font-weight: 700; border-bottom: 2px solid #217346; padding: 0 9px 2px 8px; }
.nav { width: 69px; display: flex; gap: 15px; padding: 6px 0 0 19px; flex: none; }
.nav i { border: 3px solid transparent; border-right-color: #bbb; height: 6px; width: 6px; border-left: 0; }
.nav .next { border: 3px solid transparent; border-left-color: #bbb; border-right: 0; }
.ready { display: flex; align-items: center; gap: 25px; height: 19px; flex: none; padding-left: 5px; background: #f1f1f1; font-size: 9px; }
.cursor { position: absolute; left: 304px; top: 223px; }

.sap { flex: 1; min-width: 0; display: flex; flex-direction: column; background: #f0f0f0; border: solid #3c7fb1; border-width: 1px 2px 1px 1px; box-shadow: -1px 0 5px rgba(0, 80, 140, .35); }
.title { height: 25px; flex: none; background: #fff; display: flex; justify-content: flex-end; align-items: center; border-bottom: 1px solid #e4e4e4; }
.title button { width: 39px; }
.menu { height: 23px; flex: none; display: grid; grid-template-columns: 31px 33px 36px 44px 38px 42px 45px 50px 48px 46px 51px 39px 39px 1fr; background: #f8f8f8; padding: 0 6px 0 13px; align-items: center; color: #111; }
.menu button { justify-content: flex-start; }
.get { justify-self: end; }
.tools { height: 23px; flex: none; display: flex; align-items: center; background: linear-gradient(#fcfcfc, #eee); }
.tools button { width: 20px; height: 20px; }
.grip { width: 4px; height: 18px; margin: 0 2px; background: radial-gradient(circle, #999 1px, transparent 1px) 0 0 / 4px 3px; flex: none; }
.sep { width: 5px; height: 14px; background: linear-gradient(#ccc, #ccc) center / 1px 100% no-repeat; flex: none; }
.tools .txt { font-weight: 700; font-size: 11px; }
.tools .thin { font-weight: 400; }
.tools .dim { color: #a6a6a6; }
.tools .dd { width: 12px; }
.tools .small { width: 9px; }
.tools .last { width: 24px; }
.tools .held, aside .held { outline: 1px solid #3d8fd0; outline-offset: -1px; background: #eaf4fc; }
.fill { flex: 1; }
.work { flex: 1; min-height: 0; display: flex; border-top: 1px solid #b8b8b8; }
aside { width: 22px; flex: none; border-right: 1px solid #bbb; border-left: 1px solid #777; background: linear-gradient(90deg, #fbfbfb, #eee); }
.hgrip { display: block; height: 3px; margin: 3px 1px; background: radial-gradient(circle, #999 1px, transparent 1px) 0 0 / 3px 3px; }
.hgrip.low { margin-top: 20px; margin-bottom: 4px; }
.ten, .six, .four { display: flex; flex-direction: column; }
.ten { height: 225px; } .six { height: 135px; } .four { height: 90px; }
aside button { flex: 1; width: 19px; min-height: 0; }
.more { margin-left: 6px; height: 9px; }
aside .word { position: relative; font-size: 10px; line-height: 10px; justify-content: flex-start; align-items: flex-end; padding: 0 0 1px 1px; color: #345; }
aside .word svg { position: absolute; right: 0; top: 1px; }
.doc { flex: 418; min-width: 0; display: flex; flex-direction: column; background: #fff; }
.first-doc { flex: 421; }
.second { border-left: 1px solid #777; }
.doc-bar { height: 19px; flex: none; display: flex; align-items: flex-end; background: #f0f0f0; padding: 0 4px 0 12px; border-bottom: 1px solid #888; }
.tab { height: 16px; gap: 3px; justify-content: flex-start; padding: 0 6px; border: 1px solid #888; border-bottom: 0; border-radius: 4px 4px 0 0; }
.plain { width: 119px; background: #f6f6f6; margin-bottom: -1px; }
.blue { width: 302px; gap: 6px; background: linear-gradient(#a9c3e2, #8fb1d9 50%, #bcd3ec); font-family: Roboto, sans-serif; }
.rest { flex: 1; }
.doc-bar .dd { width: 15px; height: 16px; }
.view { flex: 1; min-height: 0; width: 100%; }
.view text { font: 12px "Open Sans", sans-serif; text-anchor: middle; fill: #222; }
.tag { fill: #fff; stroke: #888; }
.status { height: 18px; flex: none; display: flex; align-items: center; border-top: 1px solid #ccc; font-family: Roboto, sans-serif; }
.status > span:first-child { flex: 1; padding-left: 13px; }
.status button { width: 28px; height: 16px; border: 1px solid #ccc; margin-right: 1px; }
.unit { display: flex; align-items: center; height: 17px; border: 1px solid #c4c4c4; background: #e6e6e6; padding: 0 3px 0 2px; }
.unit select { flex: 1; }
.unit.a { width: 84px; } .unit.b { width: 69px; }

.taskbar { height: 33px; flex: none; display: flex; background: #020306; color: #fff; }
.start { width: 40px; }
.apps { width: 455px; display: grid; grid-template-columns: repeat(11, 1fr); }
.apps button { position: relative; height: 33px; }
.apps .run::after { content: ""; position: absolute; left: 3px; right: 3px; bottom: 0; height: 2px; background: #76b9ed; }
.apps .front { background: #333437; }
.apps .front::after { left: 0; right: 0; }
.tray { flex: 1; display: flex; align-items: center; justify-content: flex-end; border-right: 1px solid #555; margin-right: 3px; }
.help1 { margin-right: 58px; } .help2 { margin-right: 7px; }
.chev { margin-right: 8px; } .batt { margin-right: 7px; } .mon { margin-right: 6px; } .snd { margin-right: 8px; }
.lang { width: 26px; }
time { display: flex; flex-direction: column; width: 52px; align-items: center; line-height: 15px; }
.note { position: relative; margin: 2px 8px 0 15px; }
.note b { position: absolute; left: 11px; top: 7px; font-size: 9px; line-height: 13px; }
</style>
